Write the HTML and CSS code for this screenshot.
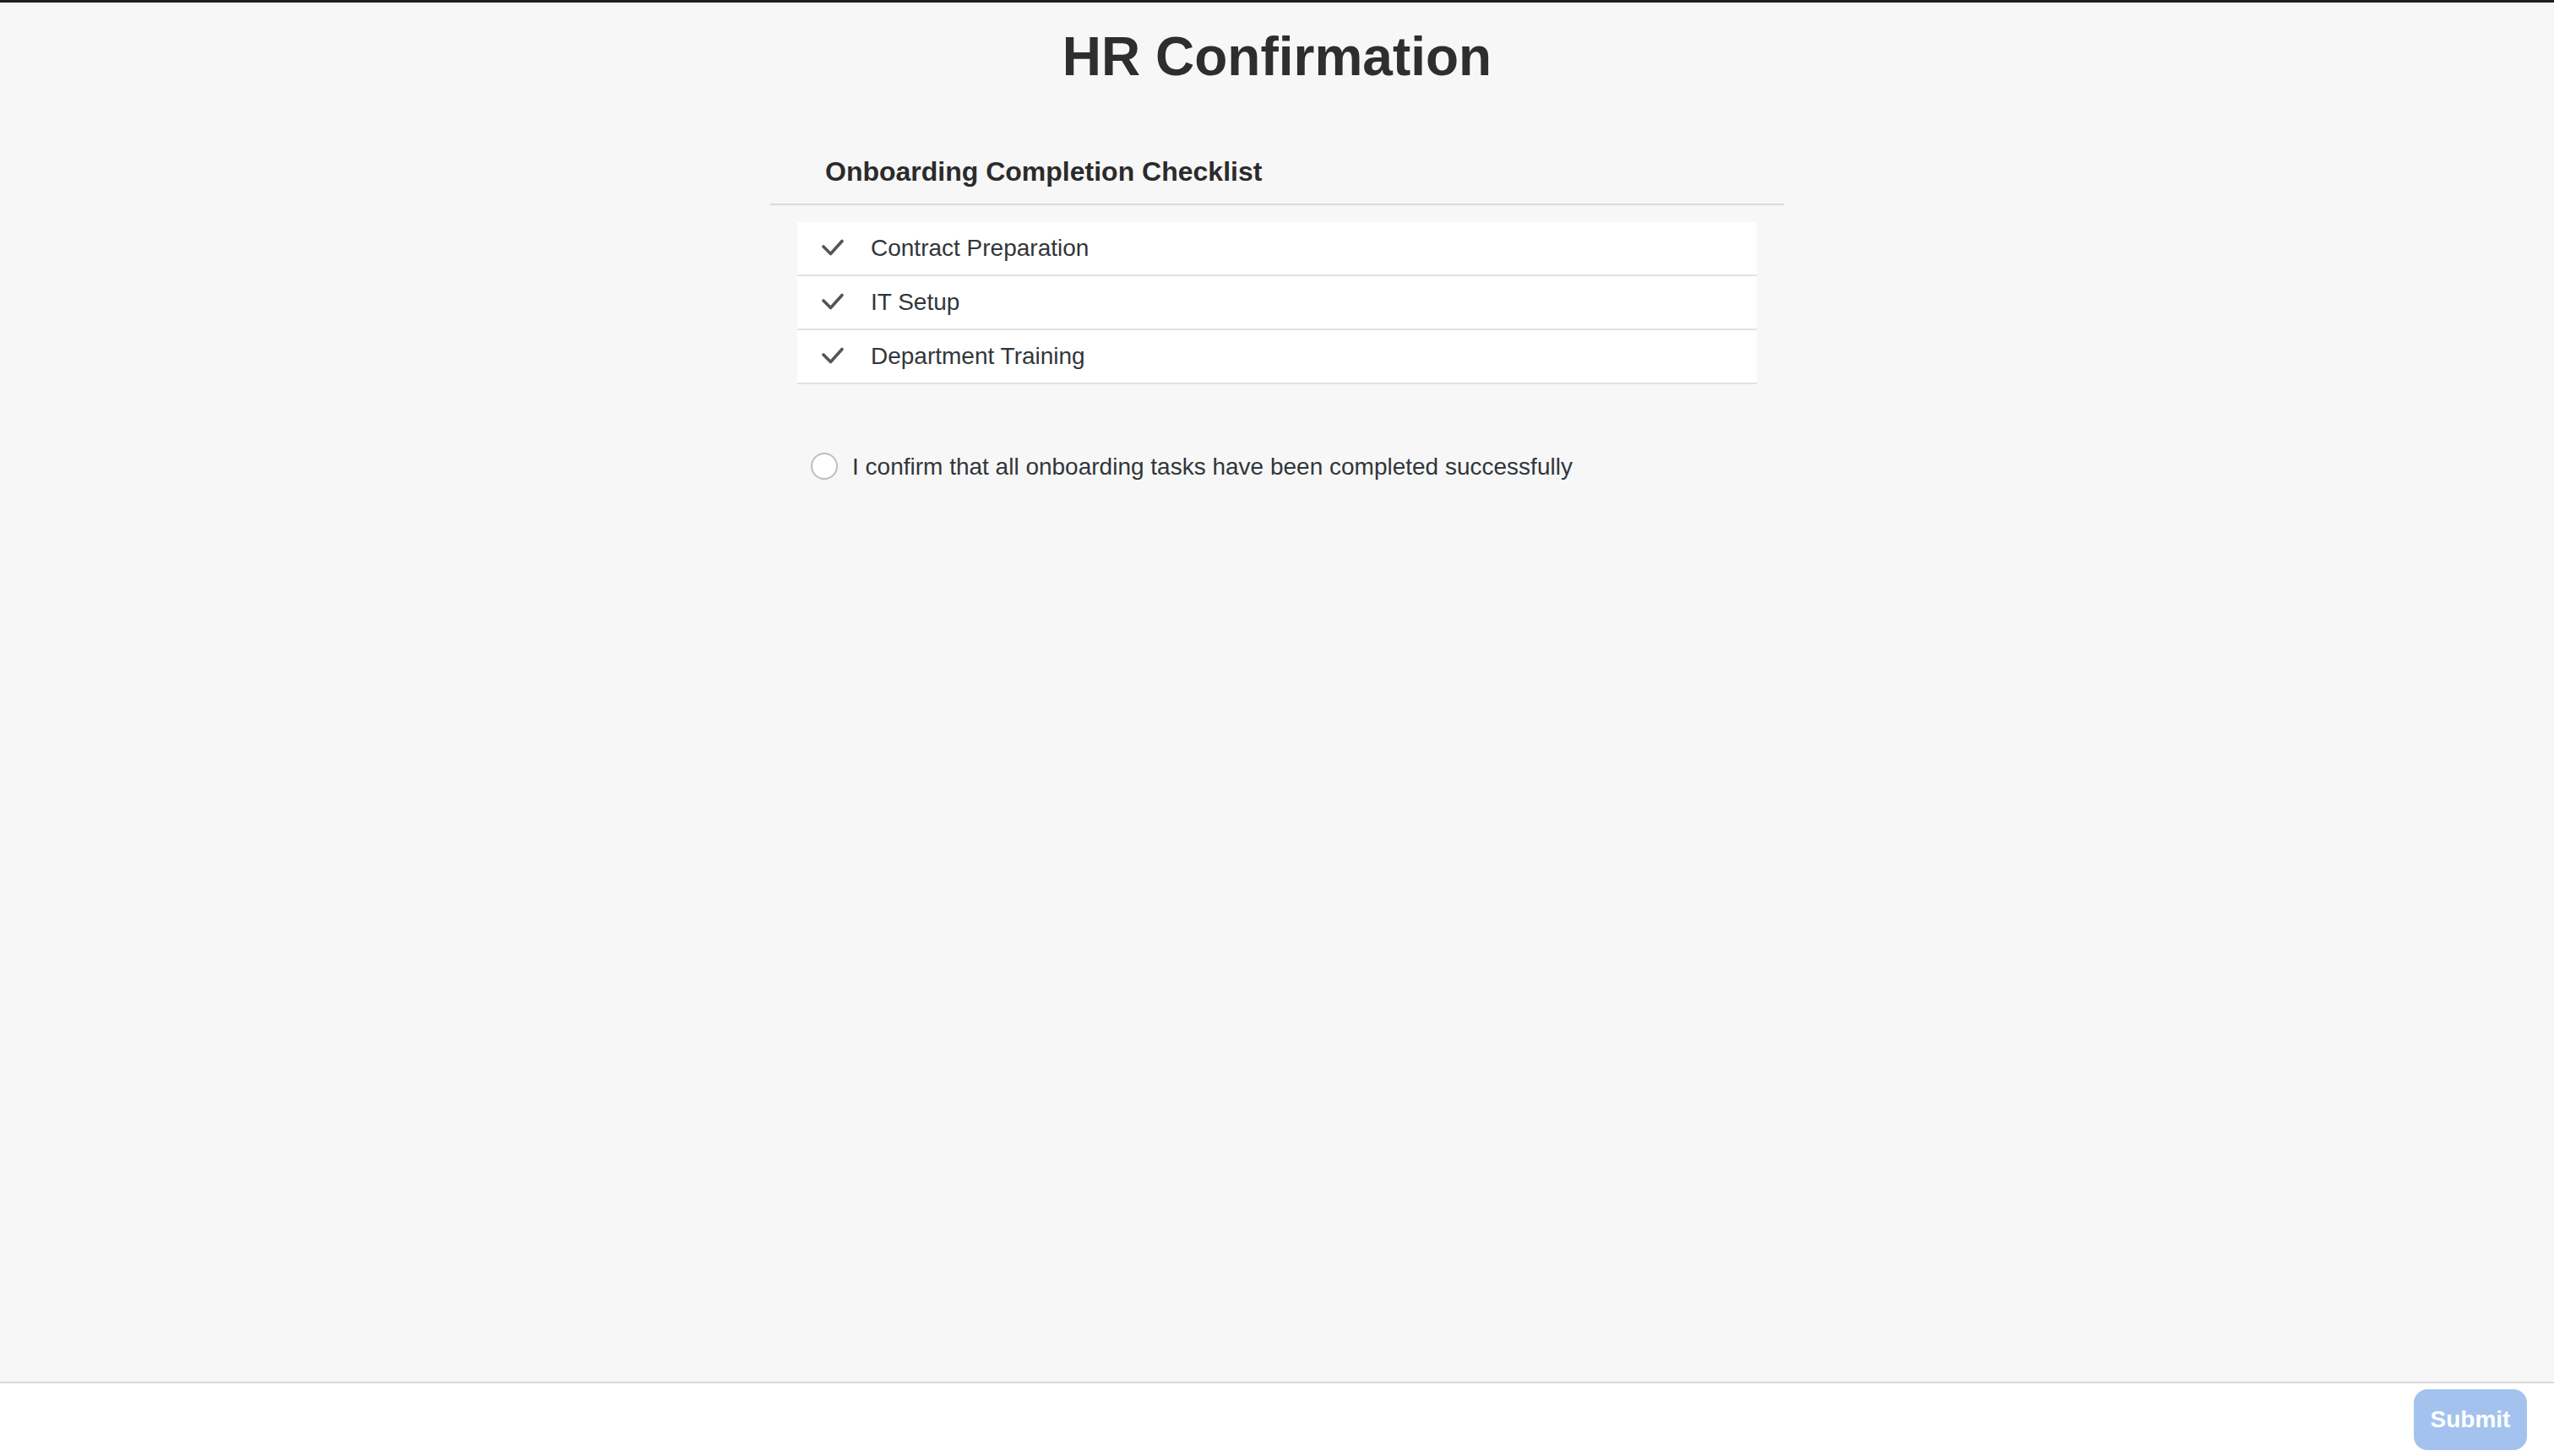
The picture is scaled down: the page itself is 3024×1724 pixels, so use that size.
FILE: index.html
```html
<!DOCTYPE html>
<html lang="en">
<head>
<meta charset="utf-8">
<title>HR Confirmation</title>
<link rel="stylesheet" href="styles.css">
</head>
<body>
<div class="page">
  <main class="content">
    <h1 class="title">HR Confirmation</h1>
    <section class="panel">
      <h2 class="panel-header">Onboarding Completion Checklist</h2>
      <ul class="checklist">
        <li class="item">
          <svg class="check" viewBox="0 0 26 20" width="26" height="20"><polyline points="2,9 10.5,17.5 24,2.5" fill="none" stroke="#555555" stroke-width="3.6" stroke-linecap="round" stroke-linejoin="round"/></svg>
          <span class="item-text">Contract Preparation</span>
        </li>
        <li class="item">
          <svg class="check" viewBox="0 0 26 20" width="26" height="20"><polyline points="2,9 10.5,17.5 24,2.5" fill="none" stroke="#555555" stroke-width="3.6" stroke-linecap="round" stroke-linejoin="round"/></svg>
          <span class="item-text">IT Setup</span>
        </li>
        <li class="item">
          <svg class="check" viewBox="0 0 26 20" width="26" height="20"><polyline points="2,9 10.5,17.5 24,2.5" fill="none" stroke="#555555" stroke-width="3.6" stroke-linecap="round" stroke-linejoin="round"/></svg>
          <span class="item-text">Department Training</span>
        </li>
      </ul>
      <label class="confirm">
        <span class="radio"></span>
        <span class="confirm-text">I confirm that all onboarding tasks have been completed successfully</span>
      </label>
    </section>
  </main>
  <footer class="footer">
    <button class="submit" type="button" disabled>Submit</button>
  </footer>
</div>
</body>
</html>
```

FILE: styles.css
```css
* { box-sizing: border-box; }

html, body {
  margin: 0;
  padding: 0;
  height: 100%;
}

body {
  background: #f7f7f7;
  font-family: "Liberation Sans", Arial, sans-serif;
  color: #32363a;
}

.page {
  display: flex;
  flex-direction: column;
  height: 100vh;
  border-top: 3px solid #1e1e1e;
}

.content {
  flex: 1;
}

.title {
  margin: 0;
  padding-top: 26px;
  font-size: 64px;
  line-height: 76px;
  font-weight: 700;
  text-align: center;
  color: #2e2e2e;
}

.panel {
  width: 1200px;
  margin: 78px auto 0;
}

.panel-header {
  margin: 0;
  padding: 0 0 18px 65px;
  font-size: 32px;
  line-height: 40px;
  font-weight: 700;
  color: #2b2b2b;
  border-bottom: 2px solid #d9d9d9;
}

.checklist {
  list-style: none;
  margin: 20px 32px 0;
  padding: 0;
}

.item {
  display: flex;
  align-items: center;
  height: 64px;
  padding-left: 29px;
  background: #ffffff;
  border-bottom: 2px solid #e2e2e2;
}

.check {
  flex: none;
  display: block;
  margin-top: -2px;
}

.item-text {
  margin-left: 32px;
  font-size: 28px;
  line-height: 62px;
  color: #32363a;
}

.confirm {
  display: flex;
  align-items: center;
  margin-top: 80px;
  padding-left: 48px;
}

.radio {
  flex: none;
  width: 32px;
  height: 32px;
  border: 2px solid #bdbdbd;
  border-radius: 50%;
  background: #ffffff;
}

.confirm-text {
  margin-left: 17px;
  font-size: 28px;
  line-height: 32px;
  padding-top: 2px;
  color: #32363a;
}

.footer {
  flex: none;
  display: flex;
  justify-content: flex-end;
  align-items: center;
  height: 88px;
  padding-right: 32px;
  background: #ffffff;
  border-top: 2px solid #d9d9d9;
}

.submit {
  width: 134px;
  height: 72px;
  border: none;
  border-radius: 16px;
  background: #a3c3ee;
  color: #ffffff;
  font-family: "Liberation Sans", Arial, sans-serif;
  font-size: 28px;
  font-weight: 700;
  padding: 0;
}
```
